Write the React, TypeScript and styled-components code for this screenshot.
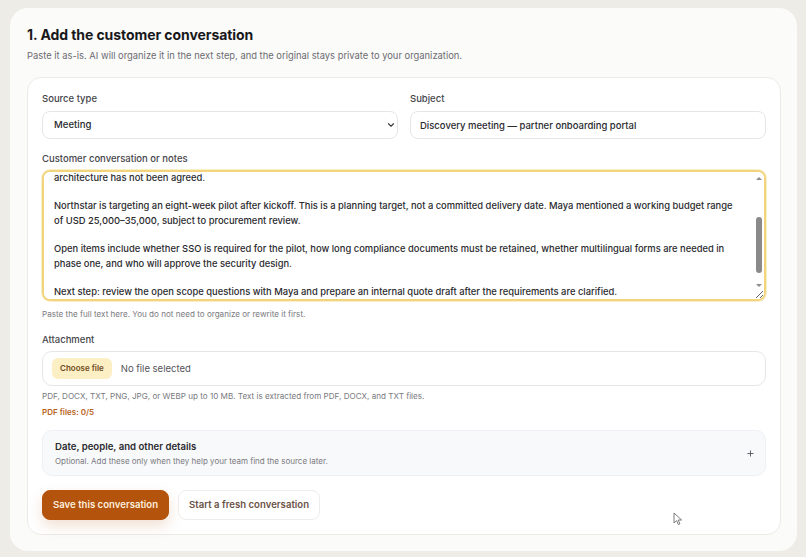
import React, { useEffect, useRef } from "react";
import styled, { createGlobalStyle } from "styled-components";
import { ChevronDown, Plus } from "lucide-react";

const GlobalStyle = createGlobalStyle`
  html, body {
    margin: 0;
    padding: 0;
    background: #eeece7;
    font-family: Inter, "Noto Sans", sans-serif;
    color: #1d1d1f;
  }
  * { box-sizing: border-box; }
`;

const Page = styled.div`
  position: relative;
  width: 806px;
  height: 557px;
  padding: 8px 9px 6px 10px;
`;

const Sheet = styled.section`
  height: 543px;
  background: #fbfbfa;
  border-radius: 18px;
  padding: 17px 16px 17px 17px;
  display: flex;
  flex-direction: column;
`;

const Title = styled.h1`
  margin: 0;
  font-size: 14px;
  line-height: 20px;
  font-weight: 700;
  letter-spacing: -0.005em;
  color: #18181b;
`;

const Lead = styled.p`
  margin: 4px 0 0;
  font-size: 9.4px;
  line-height: 14px;
  color: #6b6b70;
`;

const Card = styled.div`
  margin-top: 14px;
  flex: 1;
  background: #ffffff;
  border: 1px solid #ecebe8;
  border-radius: 14px;
  padding: 14px 14px 14px 14px;
  display: flex;
  flex-direction: column;
`;

const Row = styled.div`
  display: grid;
  grid-template-columns: 1fr 1fr;
  gap: 12px;
`;

const Field = styled.div<{ $top?: number; $gap?: number }>`
  display: flex;
  flex-direction: column;
  gap: ${(p) => p.$gap ?? 4}px;
  margin-top: ${(p) => p.$top ?? 0}px;
`;

const Label = styled.label`
  font-size: 9.5px;
  line-height: 14px;
  font-weight: 500;
  color: #46464b;
`;

const SelectWrap = styled.div`
  position: relative;
`;

const Select = styled.select`
  appearance: none;
  width: 100%;
  height: 28px;
  border: 1px solid #e6e6e9;
  border-radius: 8px;
  background: #ffffff;
  padding: 0 24px 0 11px;
  font: 500 9.6px/14px Inter, sans-serif;
  color: #2a2a2e;
  outline: none;
`;

const Chevron = styled.span`
  position: absolute;
  right: 2px;
  top: 9px;
  display: flex;
  color: #3a3a3f;
  pointer-events: none;
`;

const TextInput = styled.input`
  width: 100%;
  height: 28px;
  border: 1px solid #e6e6e9;
  border-radius: 8px;
  background: #ffffff;
  padding: 0 9px;
  font: 500 9.5px/14px Inter, sans-serif;
  color: #2a2a2e;
  outline: none;
`;

const NotesFrame = styled.div`
  position: relative;
`;

const Notes = styled.textarea`
  display: block;
  width: 100%;
  height: 131px;
  resize: vertical;
  border: 2px solid #f2d47c;
  border-radius: 8px;
  background: #ffffff;
  padding: 1px 14px 0 10px;
  font: 500 9.4px/14.3px Inter, sans-serif;
  color: #2a2a2e;
  outline: none;
  box-shadow: 0 0 0 1px #faefcc;
  caret-color: #222;
`;

/* the textarea's scroll bar, painted over its right edge */
const ScrollRail = styled.div`
  position: absolute;
  top: 4px;
  right: 3px;
  width: 8px;
  height: 116px;
  pointer-events: none;
`;

const ScrollArrow = styled.span<{ $down?: boolean }>`
  position: absolute;
  left: 1px;
  ${(p) => (p.$down ? "bottom: 3px;" : "top: 3px;")}
  width: 0;
  height: 0;
  border-left: 3px solid transparent;
  border-right: 3px solid transparent;
  ${(p) => (p.$down ? "border-top: 3px solid #8d8d8d;" : "border-bottom: 3px solid #8d8d8d;")}
`;

const ScrollThumb = styled.span`
  position: absolute;
  left: 1px;
  top: 43px;
  width: 6px;
  height: 56px;
  border-radius: 3px;
  background: #8a8a8a;
`;

const Hint = styled.p<{ $tone?: "muted" | "accent"; $top?: number }>`
  margin: ${(p) => p.$top ?? 0}px 0 0;
  font-size: ${(p) => (p.$tone === "accent" ? 8 : 8.1)}px;
  line-height: 11px;
  font-weight: ${(p) => (p.$tone === "accent" ? 600 : 400)};
  color: ${(p) => (p.$tone === "accent" ? "#b8651c" : "#7a7a80")};
`;

const FileBox = styled.div`
  height: 35px;
  border: 1px solid #e6e6e9;
  border-radius: 10px;
  background: #ffffff;
  display: flex;
  align-items: center;
  gap: 9px;
  padding: 0 9px;
`;

const HiddenInput = styled.input`
  position: absolute;
  width: 1px;
  height: 1px;
  opacity: 0;
  pointer-events: none;
`;

const FileButton = styled.label`
  height: 21px;
  padding: 0 8px;
  border-radius: 6px;
  background: #fcefc4;
  color: #6e4b1c;
  font: 600 8px/21px Inter, sans-serif;
  cursor: pointer;
`;

const FileName = styled.span`
  font: 400 9.5px/14px Inter, sans-serif;
  color: #55555a;
`;

const Details = styled.div`
  margin-top: 12px;
  height: 46px;
  border: 1px solid #eef0f3;
  border-radius: 10px;
  background: #f8f9fb;
  display: flex;
  align-items: center;
  justify-content: space-between;
  padding: 0 10px 0 12px;
`;

const DetailsText = styled.div`
  display: flex;
  flex-direction: column;
  gap: 3px;
`;

const DetailsTitle = styled.span`
  font-size: 9.6px;
  line-height: 13px;
  font-weight: 600;
  color: #2a2a2e;
`;

const DetailsSub = styled.span`
  font-size: 8px;
  line-height: 11px;
  color: #7a7a80;
`;

const Toggle = styled.span`
  display: flex;
  color: #55555a;
`;

const Actions = styled.div`
  margin-top: 14px;
  display: flex;
  gap: 9px;
`;

const Button = styled.button<{ $primary?: boolean }>`
  height: 30px;
  padding: 0 10px;
  border-radius: 8px;
  font: 600 9.6px/1 Inter, sans-serif;
  cursor: pointer;
  border: 1px solid ${(p) => (p.$primary ? "#b4530c" : "#efecea")};
  background: ${(p) => (p.$primary ? "#b4530c" : "#ffffff")};
  color: ${(p) => (p.$primary ? "#fdeedd" : "#6b5246")};
  box-shadow: ${(p) => (p.$primary ? "0 6px 14px rgba(180, 83, 12, 0.18)" : "none")};
`;

const Pointer = styled.svg`
  position: absolute;
  left: 673px;
  top: 512px;
  pointer-events: none;
`;

const notes = `Call with Maya Chen, operations lead at Northstar Logistics, about a new partner onboarding portal.

Northstar wants partners to submit company details, upload compliance documents, and follow approval status in one place. Today this runs through email and shared spreadsheets.

Maya said their IT team prefers single sign-on through the existing identity provider, but the integration
architecture has not been agreed.

Northstar is targeting an eight-week pilot after kickoff. This is a planning target, not a committed delivery date. Maya mentioned a working budget range
of USD 25,000–35,000, subject to procurement review.

Open items include whether SSO is required for the pilot, how long compliance documents must be retained, whether multilingual forms are needed in
phase one, and who will approve the security design.

Next step: review the open scope questions with Maya and prepare an internal quote draft after the requirements are clarified.`;

export default function App() {
  const notesRef = useRef<HTMLTextAreaElement>(null);

  useEffect(() => {
    const el = notesRef.current;
    if (!el) return;
    el.focus();
    el.setSelectionRange(el.value.length, el.value.length);
    el.scrollTop = el.scrollHeight;
  }, []);

  return (
    <>
      <GlobalStyle />
      <Page>
        <Sheet>
          <Title>1. Add the customer conversation</Title>
          <Lead>
            Paste it as-is. AI will organize it in the next step, and the original stays private to your
            organization.
          </Lead>
          <Card>
            <Row>
              <Field $gap={5}>
                <Label htmlFor="source-type">Source type</Label>
                <SelectWrap>
                  <Select id="source-type" defaultValue="meeting">
                    <option value="meeting">Meeting</option>
                    <option value="call">Call</option>
                    <option value="email">Email</option>
                  </Select>
                  <Chevron>
                    <ChevronDown size={10} strokeWidth={2.6} />
                  </Chevron>
                </SelectWrap>
              </Field>
              <Field $gap={5}>
                <Label htmlFor="subject">Subject</Label>
                <TextInput id="subject" defaultValue="Discovery meeting — partner onboarding portal" />
              </Field>
            </Row>

            <Field $top={13}>
              <Label htmlFor="notes">Customer conversation or notes</Label>
              <NotesFrame>
                <Notes id="notes" ref={notesRef} defaultValue={notes} />
                <ScrollRail>
                  <ScrollArrow />
                  <ScrollThumb />
                  <ScrollArrow $down />
                </ScrollRail>
              </NotesFrame>
            </Field>
            <Hint $top={8}>Paste the full text here. You do not need to organize or rewrite it first.</Hint>

            <Field $top={13}>
              <Label htmlFor="attachment">Attachment</Label>
              <FileBox>
                <HiddenInput id="attachment" type="file" />
                <FileButton htmlFor="attachment">Choose file</FileButton>
                <FileName>No file selected</FileName>
              </FileBox>
            </Field>
            <Hint $top={5}>
              PDF, DOCX, TXT, PNG, JPG, or WEBP up to 10 MB. Text is extracted from PDF, DOCX, and TXT files.
            </Hint>
            <Hint $tone="accent" $top={5}>
              PDF files: 0/5
            </Hint>

            <Details>
              <DetailsText>
                <DetailsTitle>Date, people, and other details</DetailsTitle>
                <DetailsSub>Optional. Add these only when they help your team find the source later.</DetailsSub>
              </DetailsText>
              <Toggle>
                <Plus size={9} strokeWidth={2.4} />
              </Toggle>
            </Details>

            <Actions>
              <Button $primary>Save this conversation</Button>
              <Button>Start a fresh conversation</Button>
            </Actions>
          </Card>
        </Sheet>
        <Pointer width="10" height="14" viewBox="0 0 10 14">
          <path d="M1 1 L1 11 L3.6 8.6 L5.4 12.6 L6.9 11.9 L5.2 8 L8.6 8 Z" fill="#ffffff" stroke="#6d6d6d" strokeWidth="0.9" strokeLinejoin="round" />
        </Pointer>
      </Page>
    </>
  );
}
